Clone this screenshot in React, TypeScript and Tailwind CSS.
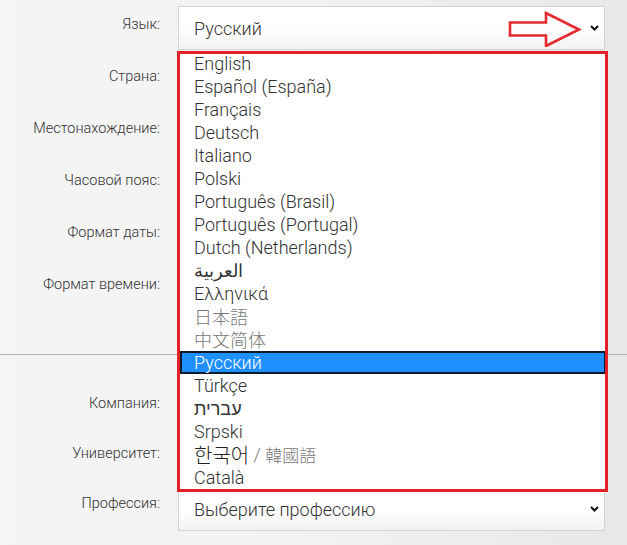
import { ReactNode } from 'react';

const languages: { label: ReactNode; className?: string; selected?: boolean }[] = [
  { label: 'English' },
  { label: 'Español (España)' },
  { label: 'Français' },
  { label: 'Deutsch' },
  { label: 'Italiano' },
  { label: 'Polski' },
  { label: 'Português (Brasil)' },
  { label: 'Português (Portugal)' },
  { label: 'Dutch (Netherlands)' },
  { label: 'العربية', className: 'font-bold text-[12px] text-[#222]' },
  { label: 'Ελληνικά' },
  { label: '日本語', className: "text-[17px] text-[#777] font-['Noto_Sans_CJK_JP',sans-serif] font-light" },
  { label: '中文简体', className: "text-[17px] text-[#777] font-['Noto_Sans_CJK_SC',sans-serif] font-light" },
  { label: 'Русский', selected: true },
  { label: 'Türkçe' },
  { label: 'עברית', className: 'font-bold text-[17px] text-[#222]' },
  { label: 'Srpski' },
  {
    label: (
      <>
        <span className="text-[20px] text-[#222] font-['Noto_Sans_CJK_KR',sans-serif] font-light">한국어</span>
        <span className="text-[#777]"> / </span>
        <span className="text-[17px] text-[#777] font-['Noto_Sans_CJK_TC',sans-serif] font-light">韓國語</span>
      </>
    ),
    className: 'flex items-center gap-0 whitespace-pre',
  },
  { label: 'Català' },
];

function Chevron() {
  return (
    <svg width="9" height="6" viewBox="0 0 9 6" className="absolute right-[5px] top-1/2 -translate-y-1/2">
      <path d="M1 1l3.5 3.5L8 1" fill="none" stroke="#111" strokeWidth="2" />
    </svg>
  );
}

function SelectBox({ value, children }: { value?: string; children?: ReactNode }) {
  return (
    <div className="relative h-[44px] border border-[#d4d4d4] bg-gradient-to-b from-white via-white to-[#f2f2f2] pl-[15px] flex items-center text-[18px] font-light text-[#333]">
      {value}
      <Chevron />
      {children}
    </div>
  );
}

function Label({ text, top = 'pt-[9px]' }: { text: string; top?: string }) {
  return <div className={`text-right text-[14.5px] font-light leading-[20px] text-[#333] ${top}`}>{text}</div>;
}

export default function App() {
  return (
    <div className="min-h-[545px] w-[627px] overflow-hidden bg-gradient-to-r from-[#f5f5f5] via-[#f1f2f2] to-[#e7e9e9] font-['Roboto',sans-serif] pt-[6px]">
      {/* top section */}
      <div className="grid grid-cols-[160px_427px] gap-x-[18px] gap-y-[8px]">
        <Label text="Язык:" />
        <div className="relative z-10">
          <SelectBox value="Русский">
            {/* red pointer */}
            <svg width="74" height="36" viewBox="0 0 74 36" className="absolute right-[22px] top-[4px]">
              <path
                d="M2 11.5h36V2l33 16.5L38 35V24.5H2z"
                fill="none"
                stroke="#e52a2f"
                strokeWidth="2.6"
                strokeLinejoin="miter"
              />
            </svg>
          </SelectBox>

          {/* open dropdown list */}
          <div className="absolute left-[-1px] top-[45px] w-[431px] h-[441px] border-[3px] border-[#e3202a] bg-white overflow-hidden">
            <div className="-mt-[2.5px]">
              {languages.map((l, i) =>
                l.selected ? (
                  <div
                    key={i}
                    className="h-[23px] leading-[19px] pl-[12px] border-2 border-[#0d1b2c] bg-[#1e90ff] text-white text-[18px] font-light -mr-px"
                  >
                    {l.label}
                  </div>
                ) : (
                  <div
                    key={i}
                    className={`h-[23px] leading-[23px] pl-[14px] text-[18px] font-light text-[#333] ${l.className ?? ''}`}
                  >
                    {l.label}
                  </div>
                )
              )}
            </div>
          </div>
        </div>

        <Label text="Страна:" />
        <SelectBox />
        <Label text="Местонахождение:" />
        <SelectBox />
        <Label text="Часовой пояс:" />
        <SelectBox />
        <Label text="Формат даты:" />
        <SelectBox />
        <Label text="Формат времени:" />
        <SelectBox />
      </div>

      <div className="mt-[44px] mb-[32px] h-px bg-[#b4b4b4]" />

      {/* lower section */}
      <div className="grid grid-cols-[160px_427px] gap-x-[18px] gap-y-[6px]">
        <Label text="Компания:" top="pt-[7px]" />
        <SelectBox />
        <Label text="Университет:" top="pt-[7px]" />
        <SelectBox />
        <Label text="Профессия:" top="pt-[7px]" />
        <SelectBox value="Выберите профессию" />
      </div>
    </div>
  );
}
